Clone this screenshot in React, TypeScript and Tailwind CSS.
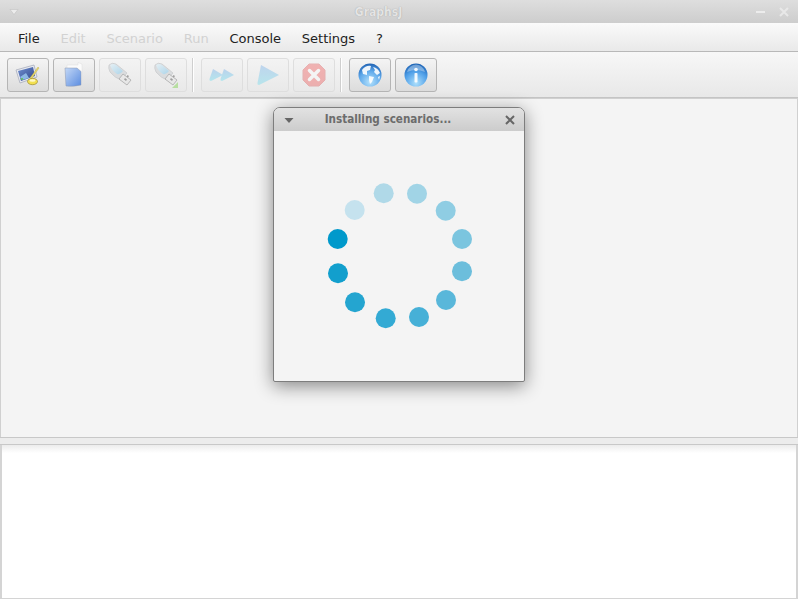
const menus = [
  { label: 'File', on: true },
  { label: 'Edit', on: false },
  { label: 'Scenario', on: false },
  { label: 'Run', on: false },
  { label: 'Console', on: true },
  { label: 'Settings', on: true },
  { label: '?', on: true },
];

const dots = [
  [44.7, 79, '#c5e2ee'],
  [73.7, 62.3, '#b0d9e8'],
  [107, 62.7, '#a1d4e6'],
  [135.7, 79.7, '#8fcde3'],
  [152, 108, '#7bc5df'],
  [152, 140.3, '#6cbedc'],
  [136, 169, '#59b7da'],
  [109, 186, '#46b0d7'],
  [75.7, 187.3, '#33aad4'],
  [45, 171.3, '#24a5d0'],
  [28, 142.3, '#129fcd'],
  [27.7, 108, '#0099cb'],
] as const;

function ToolButton({ on, children }: { on: boolean; children: React.ReactNode }) {
  return (
    <div
      className={`flex h-[34px] w-[42px] items-center justify-center rounded-[3px] border bg-gradient-to-b ${
        on ? 'border-[#b5b5b5] from-[#f4f4f4] to-[#dcdcdc]' : 'border-[#dedede] from-[#f3f3f3] to-[#e9e9e9]'
      }`}
    >
      <div className={on ? 'flex' : 'flex opacity-45'}>{children}</div>
    </div>
  );
}

function Separator() {
  return <div className="ml-[1px] mr-[3px] h-[34px] w-[2px] border-l border-[#cfcfcf] bg-white" />;
}

function PaintIcon() {
  return (
    <svg width="26" height="24" viewBox="0 0 26 24">
      <defs>
        <linearGradient id="paint-screen" x1="0" y1="0" x2="1" y2="1">
          <stop offset="0" stopColor="#6f8fd0" />
          <stop offset="1" stopColor="#2f4488" />
        </linearGradient>
      </defs>
      <path d="M1 7 L19 2 L22 14 L5 20 Z" fill="#e8eaf0" stroke="#a8adbd" strokeWidth="0.8" />
      <path d="M3 8 L18 4 L20 13 L6 18 Z" fill="url(#paint-screen)" />
      <path d="M5 14 L11 10 L14 15 L7 17 Z" fill="#8db8e4" />
      <circle cx="7" cy="16" r="1" fill="#58c24a" />
      <path d="M15 15 L23 4 L24 5 L16.500 16 Z" fill="#e8d868" stroke="#b8a848" strokeWidth="0.4" />
      <ellipse cx="17.500" cy="18.500" rx="5" ry="3.200" fill="#f2e050" stroke="#9a8a30" strokeWidth="0.7" />
      <ellipse cx="17.500" cy="17.500" rx="3" ry="1.200" fill="#fff8c8" />
    </svg>
  );
}

function DocIcon() {
  return (
    <svg width="20" height="26" viewBox="0 0 20 26">
      <defs>
        <linearGradient id="doc-fill" x1="0" y1="0" x2="1" y2="1">
          <stop offset="0" stopColor="#c4d8f6" />
          <stop offset="1" stopColor="#5a8ce0" />
        </linearGradient>
      </defs>
      <path d="M3 3 L14 3 L14 0.500 L18 2 L18 8 L17.500 23 L3 23 Z" fill="#fbfbfb" stroke="#dddddd" strokeWidth="0.500" />
      <path d="M1 6 L13 6 L17 9.500 L17 23 Q9 25 2 24 Z" fill="url(#doc-fill)" stroke="#8d99b0" strokeWidth="0.500" />
    </svg>
  );
}

function UsbIcon({ id, plus }: { id: string; plus?: boolean }) {
  return (
    <svg width="26" height="27" viewBox="0 0 26 27">
      <defs>
        <linearGradient id={id} x1="0" y1="0" x2="1" y2="1">
          <stop offset="0" stopColor="#d8eef8" />
          <stop offset="1" stopColor="#5fb8e6" />
        </linearGradient>
      </defs>
      <path d="M2 3 Q5 0 9 2 L20 11 L14 18 Q8 16 3 10 Q1 6 2 3 Z" fill="#c4c8cc" stroke="#8b9196" strokeWidth="0.6" />
      <path d="M3 3 Q6 1 9 3 L16 9 Q13 13 10 12 Q5 9 3 3 Z" fill={`url(#${id})`} />
      <path d="M16 12 L24 18 L20 23 L12 17 Z" fill="#e3e3e3" stroke="#5c5c5c" strokeWidth="0.8" />
      <path d="M18 16 L20 17.5 L19 19 L17 17.5 Z M20.5 13 L22 14 L21 15.500 L19.500 14.500 Z" fill="#444" />
      {plus && <path d="M25 20 L25 26 L19 26 Z" fill="#7bd14a" />}
    </svg>
  );
}

function ForwardIcon() {
  return (
    <svg width="26" height="14" viewBox="0 0 26 14" className="opacity-80">
      <defs>
        <linearGradient id="ff-fill" x1="0" y1="0" x2="0" y2="1">
          <stop offset="0" stopColor="#5e9fe8" />
          <stop offset="1" stopColor="#55dcee" />
        </linearGradient>
      </defs>
      <path d="M4 1 L14 7 L2 13 Q0 13 0.500 11 Z" fill="url(#ff-fill)" />
      <path d="M15 1 L25 7 L13 13 Q11 13 11.500 11 Z" fill="url(#ff-fill)" />
    </svg>
  );
}

function PlayIcon() {
  return (
    <svg width="24" height="22" viewBox="0 0 24 22" className="opacity-75">
      <defs>
        <linearGradient id="play-fill" x1="0" y1="0" x2="0" y2="1">
          <stop offset="0" stopColor="#5e9fe8" />
          <stop offset="1" stopColor="#58dcee" />
        </linearGradient>
      </defs>
      <path d="M5 1 L23 11 L3 21 Q1 21 1.500 19 Z" fill="url(#play-fill)" />
    </svg>
  );
}

function StopIcon() {
  return (
    <svg width="24" height="24" viewBox="0 0 24 24" className="opacity-85">
      <path d="M7 1 L17 1 L23 7 L23 17 L17 23 L7 23 L1 17 L1 7 Z" fill="#f05050" stroke="#d85050" />
      <path d="M7.500 7.500 L16.500 16.500 M16.500 7.500 L7.500 16.500" stroke="#fff" strokeWidth="3.500" strokeLinecap="round" />
    </svg>
  );
}

function GlobeIcon() {
  return (
    <svg width="24" height="24" viewBox="0 0 24 24">
      <defs>
        <radialGradient id="globe-fill" cx="0.5" cy="0.8" r="0.8">
          <stop offset="0" stopColor="#b5e2fc" />
          <stop offset="0.6" stopColor="#5ea8ea" />
          <stop offset="1" stopColor="#1f62b4" />
        </radialGradient>
      </defs>
      <circle cx="12" cy="12" r="11.500" fill="url(#globe-fill)" />
      <path d="M4 7 Q8 2 13 3 L12 7 L9 8 L9 12 L5 11 Z" fill="#fff" opacity="0.9" />
      <path d="M15 4 Q20 5 22 10 L19 12 L16 9 L17 7 Z" fill="#fff" opacity="0.9" />
      <path d="M11 13 L16 14 L14 19 L12 21 L11 17 Z" fill="#fff" opacity="0.9" />
      <path d="M20 14 L22 13 L21 17 Z" fill="#fff" opacity="0.9" />
    </svg>
  );
}

function InfoIcon() {
  return (
    <svg width="24" height="24" viewBox="0 0 24 24">
      <defs>
        <radialGradient id="info-fill" cx="0.5" cy="0.85" r="0.85">
          <stop offset="0" stopColor="#aee0fc" />
          <stop offset="0.6" stopColor="#4f9fe8" />
          <stop offset="1" stopColor="#1a60b2" />
        </radialGradient>
      </defs>
      <circle cx="12" cy="12" r="11.500" fill="url(#info-fill)" />
      <path d="M3 9 Q5 2 12 1.500 Q19 2 21 9 Q12 5 3 9 Z" fill="#fff" opacity="0.35" />
      <circle cx="12" cy="6.500" r="1.800" fill="#fff" opacity="0.9" />
      <rect x="10.500" y="10" width="3" height="9.500" rx="0.800" fill="#fff" opacity="0.9" />
    </svg>
  );
}

export default function App() {
  return (
    <div className="relative flex h-[599px] w-[798px] flex-col overflow-hidden bg-[#f4f4f4] font-['DejaVu_Sans',sans-serif]">
      {/* window title */}
      <div className="relative flex h-[23px] items-center justify-between bg-gradient-to-b from-[#dedede] to-[#cdcdcd] pl-[9px] pr-[9px]">
        <svg width="10" height="6" viewBox="0 0 10 6">
          <path d="M1 0.500 L9 0.500 L5 5.500 Z" fill="#ececec" stroke="#bdbdbd" strokeWidth="0.500" />
        </svg>
        <span className="mr-[18px] text-[12px] font-bold [font-stretch:condensed] text-[#e4e4e4] [text-shadow:0_0_1px_#999]">GraphsJ</span>
        <div className="flex items-center gap-[14px]">
          <div className="h-[2px] w-[9px] bg-[#ececec]" />
          <svg width="10" height="10" viewBox="0 0 10 10">
            <path d="M1 1 L9 9 M9 1 L1 9" stroke="#e8e8e8" strokeWidth="2" />
          </svg>
        </div>
      </div>

      {/* menu bar */}
      <div className="flex h-[29px] items-center border-b border-[#b8b8b8] bg-gradient-to-b from-[#fafafa] to-[#e9e9e9] pl-[7.500px] pt-[3px] text-[13px]">
        {menus.map((m) => (
          <span key={m.label} className={`px-[10.400px] ${m.on ? 'text-[#222222]' : 'text-[#d2d2d2]'}`}>
            {m.label}
          </span>
        ))}
      </div>

      {/* toolbar */}
      <div className="flex h-[46px] items-center gap-[4px] border-b border-[#c4c4c4] bg-gradient-to-b from-[#f7f7f7] to-[#e8e8e8] pl-[7px] pt-[1px]">
        <ToolButton on><PaintIcon /></ToolButton>
        <ToolButton on><DocIcon /></ToolButton>
        <ToolButton on={false}><UsbIcon id="usb-a" /></ToolButton>
        <ToolButton on={false}><UsbIcon id="usb-b" plus /></ToolButton>
        <Separator />
        <ToolButton on={false}><ForwardIcon /></ToolButton>
        <ToolButton on={false}><PlayIcon /></ToolButton>
        <ToolButton on={false}><StopIcon /></ToolButton>
        <Separator />
        <ToolButton on><GlobeIcon /></ToolButton>
        <ToolButton on><InfoIcon /></ToolButton>
      </div>

      {/* canvas area */}
      <div className="h-[339px] border-x border-t border-[#d0d0d0] bg-[#f4f4f4]" />

      {/* split divider */}
      <div className="h-[8px] border-y border-[#c8c8c8] bg-[#ececec]" />

      {/* console */}
      <div className="flex-1 border-x-2 border-b border-[#d4d4d4] bg-gradient-to-b from-[#ececec] to-white to-[8px]" />

      {/* installing dialog */}
      <div className="absolute left-[273px] top-[107px] flex h-[275px] w-[252px] flex-col overflow-hidden rounded-t-[7px] rounded-b-[2px] border border-[#7d7d7d] bg-[#f4f4f4] shadow-[0_4px_18px_rgba(0,0,0,0.45)]">
        <div className="relative flex h-[23px] flex-none items-center justify-center bg-gradient-to-b from-[#e2e2e2] to-[#cccccc] pt-[1px]">
          <svg className="absolute left-[10px] top-[10px]" width="10" height="5" viewBox="0 0 10 5">
            <path d="M0.500 0 L9.500 0 L5 5 Z" fill="#666666" />
          </svg>
          <span className="mr-[22px] text-[11.600px] font-bold [font-stretch:condensed] text-[#6c6c6c]">Installing scenarios...</span>
          <svg className="absolute right-[9px] top-[7px]" width="10" height="10" viewBox="0 0 10 10">
            <path d="M1 1 L9 9 M9 1 L1 9" stroke="#666666" strokeWidth="2" />
          </svg>
        </div>
        <div className="flex flex-1 justify-center">
          <svg width="180" height="200" viewBox="0 0 180 200" className="ml-[2px]">
            {dots.map(([x, y, c]) => (
              <circle key={c} cx={x} cy={y} r="10" fill={c} />
            ))}
          </svg>
        </div>
      </div>
    </div>
  );
}
